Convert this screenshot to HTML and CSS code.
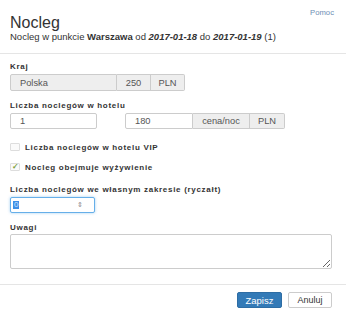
FILE: index.html
```html
<!DOCTYPE html>
<html lang="pl">
<head>
  <meta charset="UTF-8" />
  <title>Nocleg</title>
  <link rel="stylesheet" href="styles.css">
</head>
<body>
  <div class="modal">
    <div class="modal-header">
      <div class="head-text">
        <h3>Nocleg</h3>
        <p class="sub">Nocleg w punkcie <b>Warszawa</b> od <b><i>2017-01-18</i></b> do <b><i>2017-01-19</i></b> (1)</p>
      </div>
      <a class="help" href="#">Pomoc</a>
    </div>

    <div class="modal-body">
      <div class="lbl">Kraj</div>
      <div class="group kraj">
        <input class="ctl disabled" type="text" value="Polska" readonly>
        <span class="addon">250</span>
        <span class="addon">PLN</span>
      </div>

      <div class="lbl">Liczba noclegów w hotelu</div>
      <div class="row">
        <input class="ctl count" type="text" value="1">
        <div class="group price">
          <input class="ctl" type="text" value="180">
          <span class="addon">cena/noc</span>
          <span class="addon">PLN</span>
        </div>
      </div>

      <div class="check">
        <span class="box"></span>
        <span class="lbl">Liczba noclegów w hotelu VIP</span>
      </div>
      <div class="check">
        <span class="box on">&#10003;</span>
        <span class="lbl">Nocleg obejmuje wyżywienie</span>
      </div>

      <div class="lbl">Liczba noclegów we własnym zakresie (ryczałt)</div>
      <div class="ctl number">
        <span class="sel">0</span>
        <span class="spin">&#8661;</span>
      </div>

      <div class="lbl">Uwagi</div>
      <textarea class="ctl notes"></textarea>
    </div>

    <div class="modal-footer">
      <button class="btn primary">Zapisz</button>
      <button class="btn">Anuluj</button>
    </div>
  </div>
</body>
</html>
```
FILE: styles.css
```css
body { margin: 0; background: #fff; font-family: "Liberation Sans", Arial, sans-serif; color: #333; }
.modal { width: 346px; }
.modal-header { display: flex; justify-content: space-between; align-items: flex-start; height: 54px; box-sizing: border-box; padding: 0 12px 0 10px; border-bottom: 1px solid #e5e5e5; }
.modal-header h3 { margin: 15px 0 0; font-size: 16px; line-height: 16px; font-weight: normal; }
.sub { margin: 1px 0 0; font-size: 9.5px; line-height: 10px; }
.help { margin-top: 9px; font-size: 7.7px; line-height: 8px; color: #6d8eb4; text-decoration: none; }
.modal-body { padding: 8px 14px 0 10px; }
.lbl { display: block; font-weight: bold; font-size: 8px; line-height: 9px; letter-spacing: 0.7px; margin-bottom: 3px; }
.ctl { box-sizing: border-box; height: 16px; border: 1px solid #ccc; border-radius: 2px; padding: 0 9px; font: 9.3px "Liberation Sans", Arial, sans-serif; color: #555; background: #fff; outline: none; }
.ctl.disabled { background: #eee; }
.group { display: flex; }
.group .ctl { border-radius: 2px 0 0 2px; }
.addon { display: flex; align-items: center; justify-content: center; box-sizing: border-box; height: 16px; background: #eee; border: 1px solid #ccc; border-left: none; color: #555; font-size: 9.3px; }
.addon:last-child { border-radius: 0 2px 2px 0; }
.kraj { margin-bottom: 10px; }
.kraj .ctl, .kraj .addon { height: 17px; }
.kraj .ctl { width: 107px; }
.kraj .addon { width: 34px; }
.row { display: flex; gap: 28px; margin-bottom: 13px; }
.count { width: 87px; }
.price .ctl { width: 68px; }
.price .addon:nth-child(2) { width: 57px; }
.price .addon:nth-child(3) { width: 35px; }
.check { display: flex; align-items: center; gap: 5px; height: 10px; margin-bottom: 10px; }
.check + .check { margin-bottom: 13px; }
.check .lbl { margin: 0; }
.box { box-sizing: border-box; width: 10px; height: 8px; border: 1px solid #ddd; border-radius: 1px; background: #fafafa; font-size: 8px; font-weight: bold; line-height: 6px; color: #7c9f3c; text-align: center; }
.number { display: flex; align-items: center; justify-content: space-between; width: 85px; padding: 0 11px 0 2px; border-color: #66afe9; box-shadow: 0 0 3px rgba(102, 175, 233, 0.6); margin-bottom: 10px; }
.sel { background: #3d8fe6; color: #cfe4ff; padding: 0 1px; line-height: 8px; font-size: 8px; }
.spin { font-size: 7px; color: #888; }
.notes { display: block; width: 322px; height: 35px; resize: vertical; padding: 4px 9px; margin-top: -1px; }
.modal-footer { margin-top: 15px; border-top: 1px solid #e5e5e5; display: flex; justify-content: flex-end; gap: 6px; padding: 7px 14px 0 0; }
.btn { box-sizing: border-box; height: 16px; padding: 0; font: 9px "Liberation Sans", Arial, sans-serif; border: 1px solid #ccc; border-radius: 2px; background: #fff; color: #333; width: 44px; }
.btn.primary { background: #337ab7; border-color: #2e6da4; color: #fff; width: 45px; font-size: 9.5px; }
```
